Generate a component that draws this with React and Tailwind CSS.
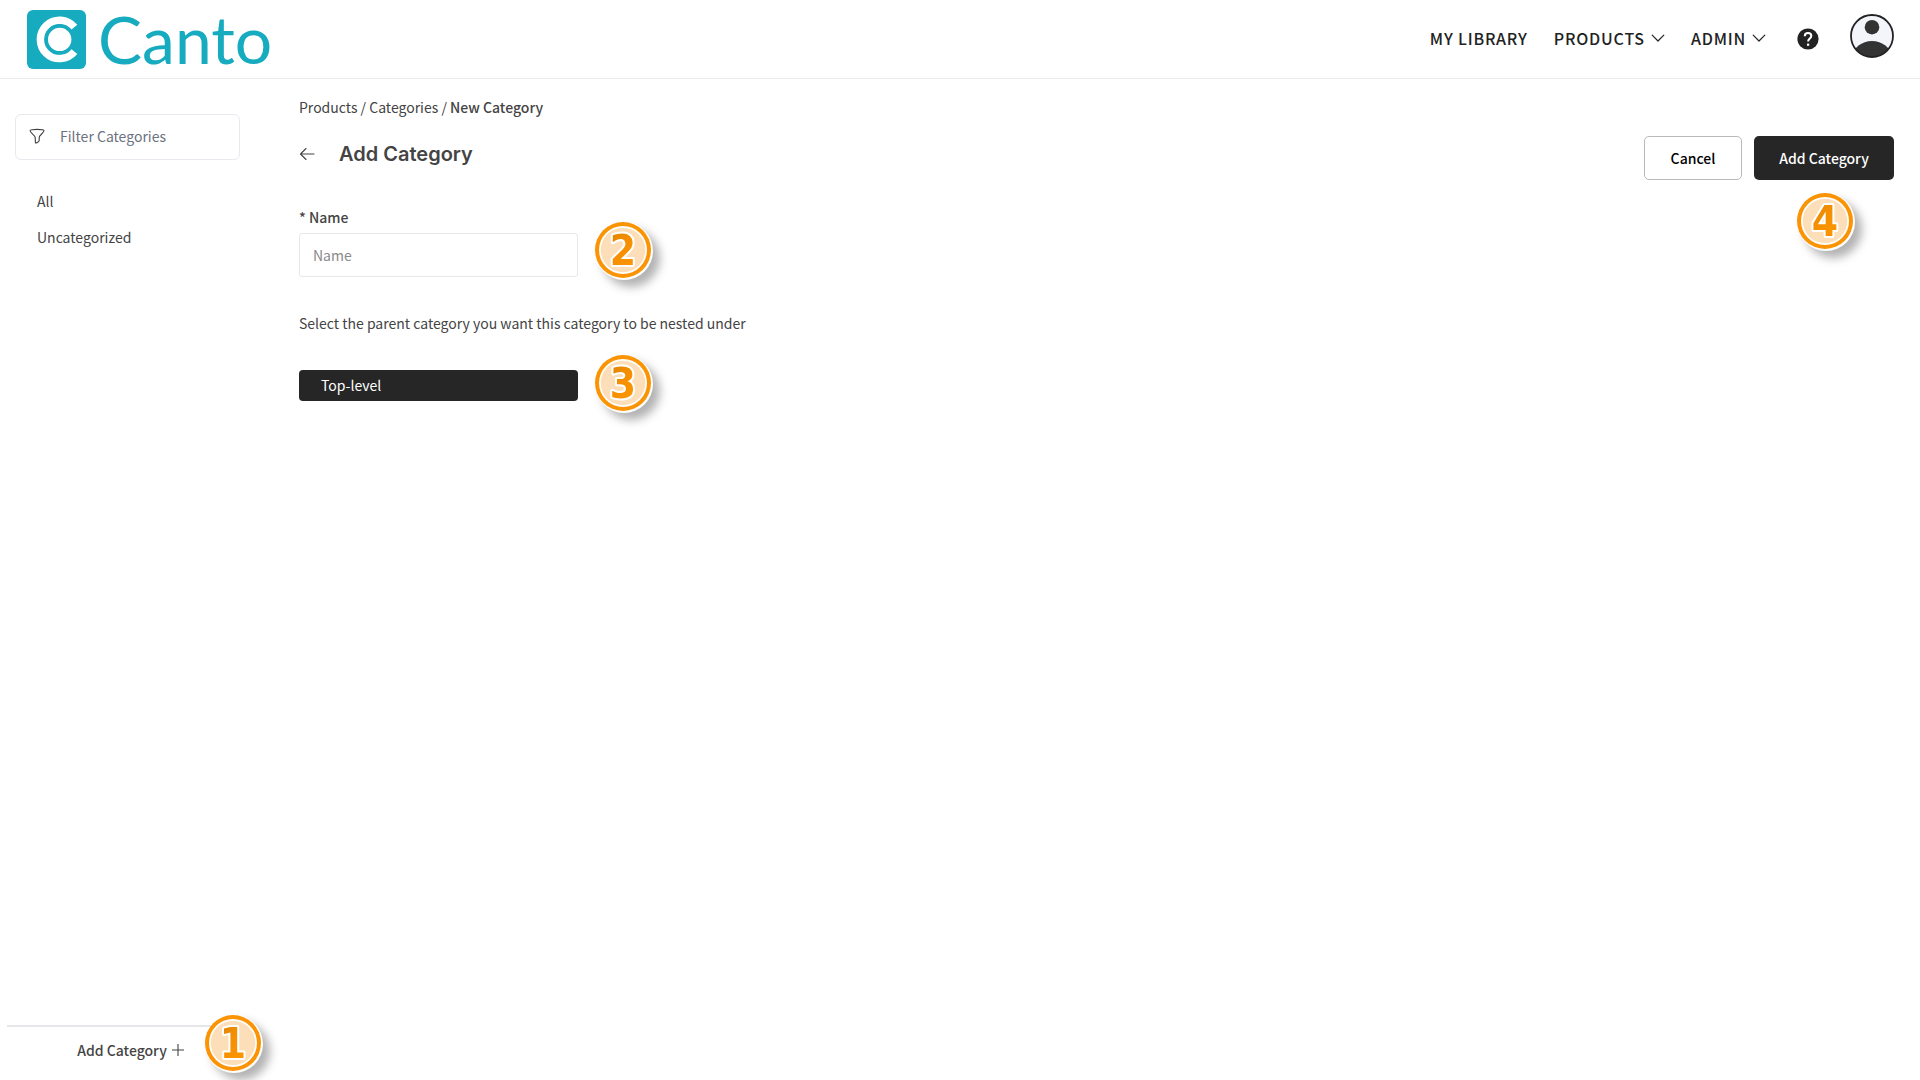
import React from "react";

function LogoMark() {
  return (
    <svg viewBox="0 0 59 59" className="size-[59px] shrink-0" aria-hidden="true">
      <rect width="59" height="59" rx="6" fill="#17abbf" />
      <path d="M47.4 17.2 A19.2 19.2 0 1 0 47.4 41.6" fill="none" stroke="#fff" strokeWidth="7.5" />
      <circle cx="32.7" cy="29.4" r="13.3" fill="#fff" stroke="#17abbf" strokeWidth="3.2" />
    </svg>
  );
}

function Chevron() {
  return (
    <svg viewBox="0 0 14 14" className="size-3.5" fill="none" stroke="currentColor" strokeWidth="1.2" strokeLinecap="round" strokeLinejoin="round" aria-hidden="true">
      <path d="M1.2 4.2 L7 10 L12.8 4.2" />
    </svg>
  );
}

function HelpIcon() {
  return (
    <svg viewBox="0 0 22 22" className="size-[22px]" aria-hidden="true">
      <circle cx="11" cy="11" r="10.6" fill="#222" />
      <path d="M7.8 8.2 C7.8 6.2 9.1 5 11 5 C13 5 14.3 6.2 14.3 7.9 C14.3 10.4 11.1 10.6 11.1 13.4" fill="none" stroke="#fff" strokeWidth="2" />
      <rect x="10" y="15.6" width="2.2" height="2.2" fill="#fff" />
    </svg>
  );
}

function Avatar() {
  return (
    <svg viewBox="0 0 44 44" className="size-11" aria-hidden="true">
      <clipPath id="avatar-clip">
        <circle cx="22" cy="22" r="21" />
      </clipPath>
      <circle cx="22" cy="22" r="21" fill="#f4f5fa" />
      <g clipPath="url(#avatar-clip)" fill="#333">
        <circle cx="22" cy="13.2" r="7.3" />
        <ellipse cx="22" cy="42" rx="19" ry="15" />
      </g>
      <circle cx="22" cy="22" r="21" fill="none" stroke="#222" strokeWidth="1.8" />
    </svg>
  );
}

function FunnelIcon() {
  return (
    <svg viewBox="0 0 16 16" className="size-4 shrink-0" fill="none" stroke="#3f3f3f" strokeWidth="1.1" strokeLinejoin="round" aria-hidden="true">
      <path d="M1 2.6 C1 1 15 1 15 2.6 C15 4.6 10.2 7.4 10.2 9.4 L10.2 12.6 C9.6 14.2 7 15.2 6.4 14.8 L6.2 9.4 C6 7.4 1 4.6 1 2.6 Z" />
    </svg>
  );
}

function ArrowLeft() {
  return (
    <svg viewBox="0 0 16 16" className="size-4" fill="none" stroke="#444" strokeWidth="1.1" strokeLinecap="round" strokeLinejoin="round" aria-hidden="true">
      <path d="M15 8 H1.5 M7 2.5 L1.5 8 L7 13.5" />
    </svg>
  );
}

function PlusIcon() {
  return (
    <svg viewBox="0 0 14 14" className="size-3.5" fill="none" stroke="#444" strokeWidth="1.1" aria-hidden="true">
      <path d="M7 1 V13 M1 7 H13" />
    </svg>
  );
}

function StepBadge({ number, className }) {
  const gradientId = "step-fill-" + number;
  return (
    <span className={"absolute size-[60px] drop-shadow-[7px_7px_5px_rgba(0,0,0,0.3)] " + className}>
      <svg viewBox="0 0 60 60" className="size-[60px]">
        <linearGradient id={gradientId} x1="0" y1="0" x2="0.6" y2="1">
          <stop offset="0" stopColor="#d98206" />
          <stop offset="0.5" stopColor="#f58f02" />
          <stop offset="1" stopColor="#fd9600" />
        </linearGradient>
        <circle cx="29" cy="29" r="29" fill="#fff" />
        <circle cx="28" cy="28" r="28" fill="#fb9404" />
        <circle cx="28" cy="28" r="24" fill="#fff" />
        <circle cx="28" cy="28" r="22.3" fill="#fcdfb9" />
        <text
          x="28"
          y="43"
          textAnchor="middle"
          fill={"url(#" + gradientId + ")"}
          stroke="#fff"
          strokeWidth="4"
          strokeLinejoin="round"
          paintOrder="stroke"
          className="font-['DejaVu_Sans_Condensed','DejaVu_Sans',sans-serif] text-[42px] font-bold"
        >
          {number}
        </text>
      </svg>
    </span>
  );
}

function Header() {
  return (
    <header className="flex h-[79px] items-start justify-between border-b border-[#ebebed] pr-[26px] pl-[27px]">
      <a href="#" className="flex items-center gap-3 pt-2.5 text-[#17abbf]">
        <LogoMark />
        <span className="font-['Lato',sans-serif] text-[66px] leading-[57px] pb-0.5">Canto</span>
      </a>
      <div className="flex items-center pt-3.5">
        <nav className="flex items-center gap-[26px] pt-1 text-base leading-5 font-medium tracking-wider text-[#222]">
          <a href="#">MY LIBRARY</a>
          <button className="flex items-center gap-1.5 tracking-wider">
            PRODUCTS
            <Chevron />
          </button>
          <button className="flex items-center gap-1.5 tracking-wider">
            ADMIN
            <Chevron />
          </button>
        </nav>
        <button aria-label="Help" className="mt-1.5 ml-[31px]">
          <HelpIcon />
        </button>
        <button aria-label="Account" className="ml-[31px]">
          <Avatar />
        </button>
      </div>
    </header>
  );
}

function Sidebar() {
  return (
    <aside className="flex w-[262px] shrink-0 flex-col justify-between pt-[35px]">
      <div className="pr-[22px] pl-[15px]">
        <label className="flex h-[46px] items-center gap-[15px] rounded-md border border-[#e8e9ee] px-[13px] pb-0.5">
          <FunnelIcon />
          <input
            type="text"
            aria-label="Filter Categories"
            placeholder="Filter Categories"
            className="w-full min-w-0 leading-5 outline-none placeholder:text-[#6b7280]"
          />
        </label>
        <ul className="mt-[23px] pl-[22px]">
          <li>
            <a href="#" className="block leading-9">All</a>
          </li>
          <li>
            <a href="#" className="block leading-9">Uncategorized</a>
          </li>
        </ul>
      </div>
      <div className="relative mx-[7px] flex h-[55px] justify-center border-t-2 border-[#e5e6ea] pb-2">
        <button className="flex items-center gap-1 font-medium">
          Add Category
          <PlusIcon />
        </button>
        <StepBadge number="1" className="-top-3 left-[198px]" />
      </div>
    </aside>
  );
}

function Main() {
  return (
    <main className="flex-1 pt-[18px] pr-[26px] pl-[37px]">
      <nav aria-label="Breadcrumb" className="leading-5">
        <a href="#">Products</a> / <a href="#">Categories</a> / <span className="font-medium">New Category</span>
      </nav>
      <div className="mt-[19px] flex items-start justify-between">
        <div className="flex items-center gap-6 pt-1">
          <button aria-label="Back">
            <ArrowLeft />
          </button>
          <h1 className="font-['Inter',sans-serif] text-xl leading-7 font-semibold">Add Category</h1>
        </div>
        <div className="flex gap-3">
          <button className="h-11 w-[98px] rounded-[5px] border border-[#b9b9bd] font-medium text-black">Cancel</button>
          <div className="relative">
            <button className="h-11 w-[140px] rounded-[5px] bg-[#262626] font-medium text-white">Add Category</button>
            <StepBadge number="4" className="top-[57px] left-[43px]" />
          </div>
        </div>
      </div>
      <label htmlFor="category-name" className="mt-[27px] block leading-5 font-medium">
        * Name
      </label>
      <div className="relative mt-1.5 w-[279px]">
        <input
          id="category-name"
          type="text"
          placeholder="Name"
          className="block h-11 w-full rounded-[3px] border border-[#e8e8ec] px-[13px] outline-none placeholder:text-[#8a8a8a]"
        />
        <StepBadge number="2" className="-top-[11px] left-[296px]" />
      </div>
      <p className="mt-9 leading-5">Select the parent category you want this category to be nested under</p>
      <div className="relative mt-[37px] w-[279px]">
        <button className="block h-[31px] w-full rounded-[4px] bg-[#262626] px-[22px] pb-0.5 text-left text-white">Top-level</button>
        <StepBadge number="3" className="-top-[15px] left-[296px]" />
      </div>
    </main>
  );
}

export default function App() {
  return (
    <div className="flex min-h-screen flex-col bg-white font-['Noto_Sans_CJK_SC',sans-serif] text-sm text-[#444]">
      <Header />
      <div className="flex flex-1">
        <Sidebar />
        <Main />
      </div>
    </div>
  );
}
